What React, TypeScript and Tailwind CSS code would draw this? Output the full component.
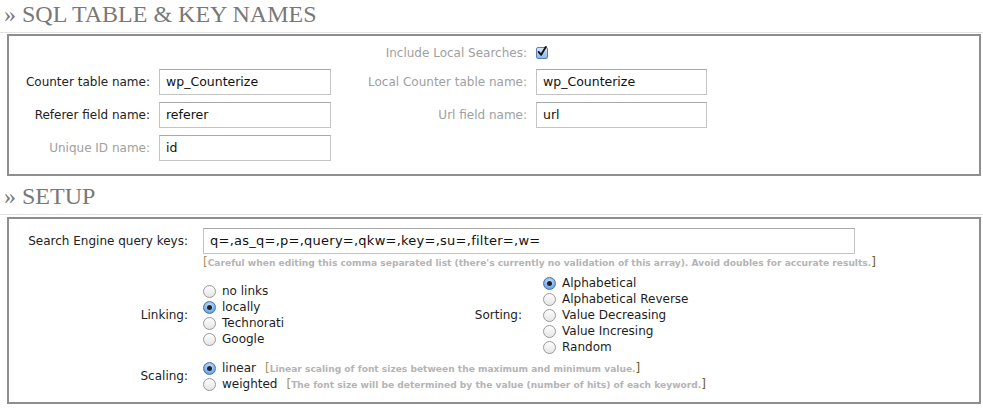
import React from 'react';

const sans = "font-['DejaVu_Sans',sans-serif]";

const Radio: React.FC<{ checked?: boolean }> = ({ checked }) => (
  <span
    className={
      'inline-flex h-[13px] w-[13px] shrink-0 items-center justify-center rounded-full border ' +
      (checked
        ? 'border-[#4a72a8] bg-[radial-gradient(circle_at_50%_35%,#cfe3fa,#7fb0e8_60%,#4f8fd8)]'
        : 'border-[#999] bg-[linear-gradient(#fdfdfd,#e6e6e6)]')
    }
  >
    {checked && <span className="h-[5px] w-[5px] rounded-full bg-[#1a2530]" />}
  </span>
);

const RadioItem: React.FC<{ label: string; checked?: boolean; children?: React.ReactNode }> = ({
  label,
  checked,
  children,
}) => (
  <div className="flex h-[16px] items-center">
    <Radio checked={checked} />
    <span className="ml-[6px] text-[12px] leading-[16px] text-[#1d1d1d]">{label}</span>
    {children}
  </div>
);

const Hint: React.FC<{ children: React.ReactNode }> = ({ children }) => (
  <span className="whitespace-nowrap leading-[14px]">
    <span className="text-[12px] text-[#a8924e]">[</span>
    <span className="text-[9.1px] font-bold text-[#b4b4b4]">{children}</span>
    <span className="text-[12px] text-[#6e5e2c]">]</span>
  </span>
);

const TextInput: React.FC<{ value: string; width: string; size?: string }> = ({ value, width, size }) => (
  <div
    className={
      'flex h-[26px] items-center border border-[#c4c4c4] border-t-[#a8a8a8] bg-white pl-[6px] text-[#111] ' +
      (size ?? 'text-[12.5px]') +
      ' ' +
      width
    }
  >
    {value}
  </div>
);

const Heading: React.FC<{ title: string }> = ({ title }) => (
  <div className="flex h-[33px] items-start border-b border-[#e2e2e2] pl-[4px] font-['Liberation_Serif',serif] text-[24px] leading-[28px] text-[#787878]">
    » {title}
  </div>
);

const Label: React.FC<{ children: React.ReactNode; muted?: boolean }> = ({ children, muted }) => (
  <div className={'whitespace-nowrap text-right text-[12px] ' + (muted ? 'text-[#a0a0a0]' : 'text-[#222]')}>
    {children}
  </div>
);

const Checkbox: React.FC = () => (
  <span className="inline-flex h-[12px] w-[12px] items-end justify-center rounded-[2px] border border-[#5b7fb0] bg-[linear-gradient(#d6e8fb,#8ab8ea)]">
    <svg width="12" height="13" viewBox="0 0 12 13" className="-mt-[4px]">
      <path d="M2 7 L5 10.5 L10.5 1" fill="none" stroke="#111" strokeWidth="2.2" strokeLinecap="round" strokeLinejoin="round" />
    </svg>
  </span>
);

export default function App() {
  return (
    <div className={'w-[983px] h-[408px] bg-white overflow-hidden ' + sans}>
      <Heading title="SQL TABLE & KEY NAMES" />
      <div className="ml-[7px] mt-[1px] w-[974px] border-2 border-[#8e8e8e] pt-[8px] pb-[13px]">
        <div className="grid grid-cols-[141px_172px_187px_172px] items-center gap-x-[9px] gap-y-[7px]">
          <div className="h-[16px]" />
          <div />
          <Label muted>Include Local Searches:</Label>
          <div className="flex h-[16px] items-center">
            <Checkbox />
          </div>

          <Label>Counter table name:</Label>
          <TextInput value="wp_Counterize" width="w-[172px]" />
          <Label muted>Local Counter table name:</Label>
          <TextInput value="wp_Counterize" width="w-[171px]" />

          <Label>Referer field name:</Label>
          <TextInput value="referer" width="w-[172px]" />
          <Label muted>Url field name:</Label>
          <TextInput value="url" width="w-[171px]" />

          <Label muted>Unique ID name:</Label>
          <TextInput value="id" width="w-[172px]" />
          <div />
          <div />
        </div>
      </div>

      <div className="mt-[6px]">
        <Heading title="SETUP" />
      </div>
      <div className="ml-[7px] mt-[2px] w-[974px] border-2 border-[#8e8e8e] pt-[9px] pb-[10px]">
        <div className="grid grid-cols-[179px_1fr] gap-x-[15px]">
          <div className="flex h-[26px] items-center justify-end">
            <Label>Search Engine query keys:</Label>
          </div>
          <div>
            <TextInput
              value="q=,as_q=,p=,query=,qkw=,key=,su=,filter=,w="
              width="w-[652px]"
              size="text-[13px] tracking-[0.25px]"
            />
            <div className="mt-[1px] flex h-[14px] items-center">
              <Hint>
                Careful when editing this comma separated list (there's currently no validation of this array). Avoid
                doubles for accurate results.
              </Hint>
            </div>
          </div>

          <div className="mt-[6px] flex items-center justify-end">
            <Label>Linking:</Label>
          </div>
          <div className="mt-[6px] flex items-center">
            <div className="w-[250px]">
              <RadioItem label="no links" />
              <RadioItem label="locally" checked />
              <RadioItem label="Technorati" />
              <RadioItem label="Google" />
            </div>
            <div className="w-[69px]">
              <Label>Sorting:</Label>
            </div>
            <div className="ml-[21px]">
              <RadioItem label="Alphabetical" checked />
              <RadioItem label="Alphabetical Reverse" />
              <RadioItem label="Value Decreasing" />
              <RadioItem label="Value Incresing" />
              <RadioItem label="Random" />
            </div>
          </div>

          <div className="mt-[5px] flex items-center justify-end">
            <Label>Scaling:</Label>
          </div>
          <div className="mt-[5px]">
            <RadioItem label="linear" checked>
              <span className="ml-[9px] flex items-center">
                <Hint>Linear scaling of font sizes between the maximum and minimum value.</Hint>
              </span>
            </RadioItem>
            <RadioItem label="weighted">
              <span className="ml-[9px] flex items-center">
                <Hint>The font size will be determined by the value (number of hits) of each keyword.</Hint>
              </span>
            </RadioItem>
          </div>
        </div>
      </div>
    </div>
  );
}
